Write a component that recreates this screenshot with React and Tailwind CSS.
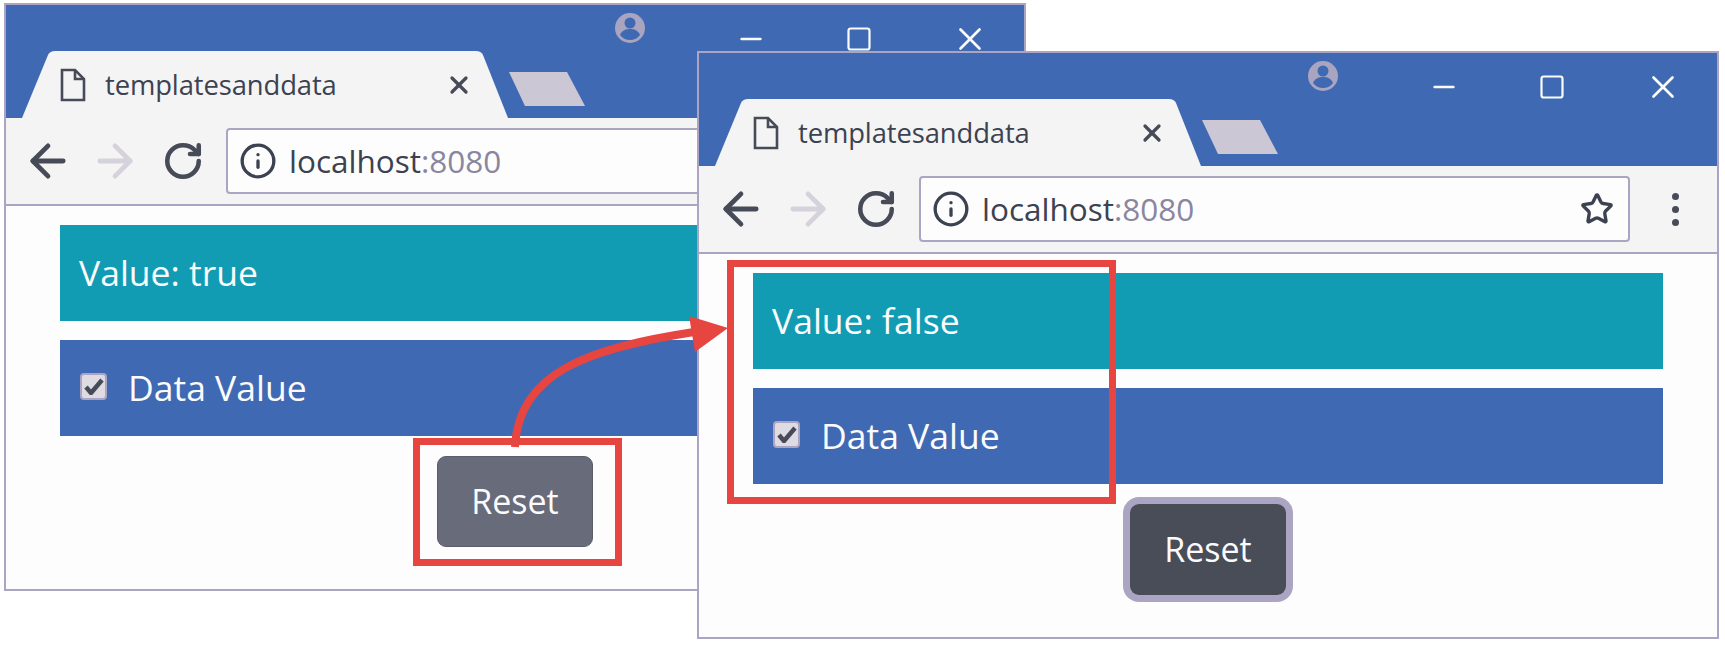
import { ArrowLeft, ArrowRight, RotateCw, Info, Star, X, Minus, Square } from "lucide-react";

const Avatar = () => (
  <svg width="32" height="32" viewBox="0 0 32 32">
    <circle cx="16" cy="16" r="15" fill="#a9a5c1" />
    <circle cx="16" cy="11" r="5.5" fill="#3f6ab3" />
    <path d="M6 23c2-5 6-6 10-6s8 1 10 6c-2 3-6 5-10 5s-8-2-10-5z" fill="#3f6ab3" />
  </svg>
);

const FileIcon = () => (
  <svg width="26" height="34" viewBox="0 0 26 34" fill="none" stroke="#474b57" strokeWidth="2.6">
    <path d="M2 2h13l9 9v21H2z" />
    <path d="M15 2v9h9" />
  </svg>
);

const Browser = ({ className, value, focused, showActions }) => (
  <div className={`absolute w-[1022px] h-[588px] border-2 border-[#aba5c3] bg-[#fdfdfd] flex flex-col ${className}`}>
    {/* title bar */}
    <div className="relative h-[113px] shrink-0 bg-[#3f6ab3] flex">
      <div className="absolute left-[608px] top-[7px]"><Avatar /></div>
      <div className="absolute left-[729px] top-[15px] flex items-center gap-[74px] text-[#fbfbfb]">
        <Minus size={32} strokeWidth={2} />
        <Square size={28} strokeWidth={1.9} className="mx-[4px]" />
        <X size={38} strokeWidth={1.7} />
      </div>
      {/* tab */}
      <div className="absolute left-[14px] bottom-0 w-[490px] h-[67px]">
        <svg width="490" height="67" viewBox="0 0 490 67" className="absolute inset-0">
          <path d="M2 67 L28 4 Q30 0 35 0 H456 Q461 0 463 4 L488 67 Z" fill="#f4f4f5" />
        </svg>
        <div className="relative h-full flex items-center pl-[40px]">
          <FileIcon />
          <span className="ml-[19px] text-[27.4px] text-[#3c4250] tracking-[-0.1px]">templatesanddata</span>
          <X size={28} strokeWidth={2.8} className="ml-[108px] text-[#474b57]" />
        </div>
      </div>
      {/* new tab button */}
      <svg width="78" height="36" viewBox="0 0 78 36" className="absolute left-[503px] top-[66px]">
        <path d="M0 1 H58 L76 35 H16 Z" fill="#ccc7d4" />
      </svg>
    </div>
    {/* toolbar */}
    <div className="h-[88px] shrink-0 bg-[#f4f4f5] border-b-2 border-[#aba5c3] flex items-center pl-[16px] pr-[30px]">
      <ArrowLeft size={52} strokeWidth={2.2} className="text-[#474b57]" />
      <ArrowRight size={52} strokeWidth={2.2} className="ml-[15px] text-[#d6d2dc]" />
      <RotateCw size={42} strokeWidth={2.6} className="ml-[21px] text-[#474b57]" />
      <div className="ml-[22px] w-[711px] h-[66px] shrink-0 bg-[#fdfdfd] border-2 border-[#aba5c3] rounded-[4px] flex items-center pl-[11px] pr-[14px]">
        <Info size={38} strokeWidth={2.1} className="text-[#3c4250]" />
        <span className="ml-[12px] text-[31.5px] text-[#3c4250]">localhost<span className="text-[#8a86a0]">:8080</span></span>
        {showActions && <Star size={34} strokeWidth={2.4} className="ml-auto text-[#3c4250]" />}
      </div>
      {showActions && (
        <div className="ml-[42px] flex flex-col gap-[6px]">
          <span className="w-[7px] h-[7px] rounded-full bg-[#474b57]" />
          <span className="w-[7px] h-[7px] rounded-full bg-[#474b57]" />
          <span className="w-[7px] h-[7px] rounded-full bg-[#474b57]" />
        </div>
      )}
    </div>
    {/* page */}
    <div className="flex-1 pt-[19px] pl-[54px] pr-[54px] text-[#fbfbfd] text-[35.5px]">
      <div className="h-[96px] bg-[#119cb4] flex items-center pl-[19px]">Value: {value}</div>
      <div className="mt-[19px] h-[96px] bg-[#3f6ab3] flex items-center pl-[20px]">
        <div className="w-[27px] h-[27px] mb-[4px] bg-[#dedbe3] border-2 border-[#aba5c3] rounded-[4px] flex items-center justify-center">
          <svg width="20" height="18" viewBox="0 0 20 18">
            <path d="M2 10l5 6L18 3" fill="none" stroke="#474b57" strokeWidth="4.5" />
          </svg>
        </div>
        <span className="ml-[21px]">Data Value</span>
      </div>
      <div className="mt-[20px] flex justify-center">
        <button
          className={`w-[156px] h-[91px] rounded-[9px] text-[34px] text-[#fbfbfd] ${focused ? "bg-[#494d58] ring-[7px] ring-[#aba5c3]" : "bg-[#686b79] border border-[#5a5d6a]"}`}
        >
          Reset
        </button>
      </div>
    </div>
  </div>
);

export default function App() {
  return (
    <div className="relative w-[1725px] h-[645px] bg-white overflow-hidden font-['Open_Sans',sans-serif]">
      <Browser className="left-[4px] top-[3px]" value="true" />
      <Browser className="left-[697px] top-[51px]" value="false" focused showActions />

      {/* callouts */}
      <div className="absolute left-[413px] top-[438px] w-[209px] h-[128px] border-[7px] border-[#e64540]" />
      <div className="absolute left-[727px] top-[260px] w-[389px] h-[244px] border-[7px] border-[#e64540]" />
      <svg width="1725" height="645" viewBox="0 0 1725 645" className="absolute inset-0 pointer-events-none">
        <path d="M515 447 C518 372 590 348 694 332" fill="none" stroke="#e64540" strokeWidth="8" />
        <path d="M689 316 L728 328 L695 352 Z" fill="#e64540" />
      </svg>
    </div>
  );
}
